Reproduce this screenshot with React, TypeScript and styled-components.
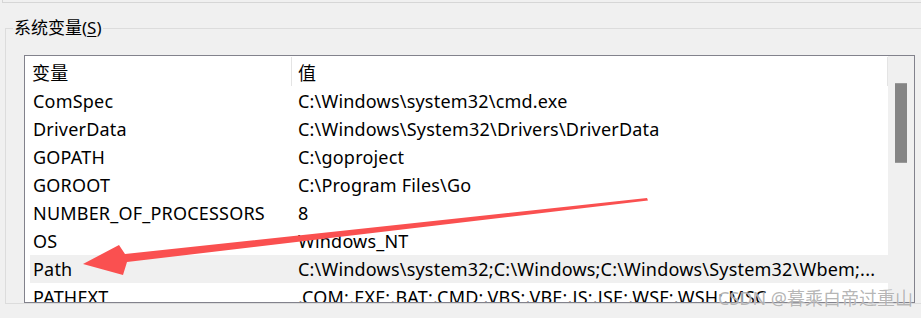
import React from "react"
import styled, { createGlobalStyle } from "styled-components"

const GlobalStyle = createGlobalStyle`
    html, body {
        margin: 0;
        padding: 0;
        background: #f0f0f0;
        overflow: hidden;
    }
    body {
        font-family: "Noto Sans", "Noto Sans CJK SC", sans-serif;
        color: #000;
    }
`

const Page = styled.div`
    position: relative;
    width: 921px;
    height: 318px;
    overflow: hidden;
    background: #f0f0f0;
`

const TopRule = styled.div`
    height: 2px;
    margin-left: 2px;
    border-left: 1px solid #d6d6d6;
    border-bottom: 1px solid #d6d6d6;
`

const GroupBox = styled.fieldset`
    margin: 15px 0 0 5px;
    padding: 17px 6px 0 0;
    border: 1px solid #dcdcdc;
    border-right: none;
    min-width: 0;
`

const Legend = styled.legend`
    margin-left: 7px;
    padding: 0 1px;
    font-size: 17px;
    line-height: 20px;
    height: 20px;
    u {
        text-decoration-thickness: 1px;
        text-underline-offset: 2px;
    }
`

const ListBox = styled.div`
    display: flex;
    width: 891px;
    height: 248px;
    margin-left: 18px;
    box-sizing: border-box;
    border: 1px solid #82828c;
    background: #fff;
    overflow: hidden;
`

const ListContent = styled.div`
    flex: 1;
    padding-left: 5px;
    overflow: hidden;
`

const Header = styled.div`
    display: grid;
    grid-template-columns: 262px 1fr;
    height: 31px;
    padding-top: 3px;
    box-sizing: border-box;
`

const HeaderCell = styled.div<{ $last?: boolean }>`
    display: flex;
    align-items: center;
    padding-left: ${props => props.$last ? '6px' : '2px'};
    font-size: 18px;
    letter-spacing: 0.2px;
    border-right: 1px solid #e4e4e4;
    margin: -2px 0 1px;
`

const Row = styled.div<{ $selected?: boolean }>`
    display: grid;
    grid-template-columns: 262px 1fr;
    height: 28px;
    align-items: center;
    background: ${props => props.$selected ? '#f0f0f0' : 'transparent'};
    font-size: 18px;
    letter-spacing: 0.2px;
    white-space: nowrap;
`

const NameCell = styled.div`
    padding-left: 3px;
`

const ValueCell = styled.div`
    padding-left: 6px;
    overflow: hidden;
`

const ScrollBar = styled.div`
    width: 26px;
    background: #f0f0f0;
    padding: 27px 7px 0;
    box-sizing: border-box;
`

const Thumb = styled.div`
    height: 80px;
    background: #858585;
    border-top: 1px solid #9a9a9a;
    border-bottom: 1px solid #9a9a9a;
    box-sizing: border-box;
`

const ArrowLayer = styled.svg`
    position: absolute;
    left: 0;
    top: 0;
    pointer-events: none;
`

const Watermark = styled.div`
    position: absolute;
    right: 8px;
    bottom: 10px;
    font-family: "Noto Sans", "Noto Sans CJK SC", sans-serif;
    font-size: 18px;
    line-height: 20px;
    color: rgba(150, 150, 150, 0.7);
    text-shadow: 0 0 1px rgba(255, 255, 255, 0.9);
`

const rows: [string, string][] = [
    ["ComSpec", "C:\\Windows\\system32\\cmd.exe"],
    ["DriverData", "C:\\Windows\\System32\\Drivers\\DriverData"],
    ["GOPATH", "C:\\goproject"],
    ["GOROOT", "C:\\Program Files\\Go"],
    ["NUMBER_OF_PROCESSORS", "8"],
    ["OS", "Windows_NT"],
    ["Path", "C:\\Windows\\system32;C:\\Windows;C:\\Windows\\System32\\Wbem;..."],
    ["PATHEXT", ".COM;.EXE;.BAT;.CMD;.VBS;.VBE;.JS;.JSE;.WSF;.WSH;.MSC"],
]

export default function App() {
    return (
        <Page>
            <GlobalStyle />
            <TopRule />
            <GroupBox>
                <Legend>系统变量(<u>S</u>)</Legend>
                <ListBox>
                    <ListContent>
                        <Header>
                            <HeaderCell>变量</HeaderCell>
                            <HeaderCell $last>值</HeaderCell>
                        </Header>
                        {rows.map(([name, value]) => (
                            <Row key={name} $selected={name === "Path"}>
                                <NameCell>{name}</NameCell>
                                <ValueCell>{value}</ValueCell>
                            </Row>
                        ))}
                    </ListContent>
                    <ScrollBar>
                        <Thumb />
                    </ScrollBar>
                </ListBox>
            </GroupBox>
            <ArrowLayer width="921" height="318" viewBox="0 0 921 318">
                <polygon
                    fill="#fa5050"
                    points="647,198 125,254 119,245 83,264 123,275 127,262 648,200.5"
                />
            </ArrowLayer>
            <Watermark>CSDN @暮乘白帝过重山</Watermark>
        </Page>
    )
}
